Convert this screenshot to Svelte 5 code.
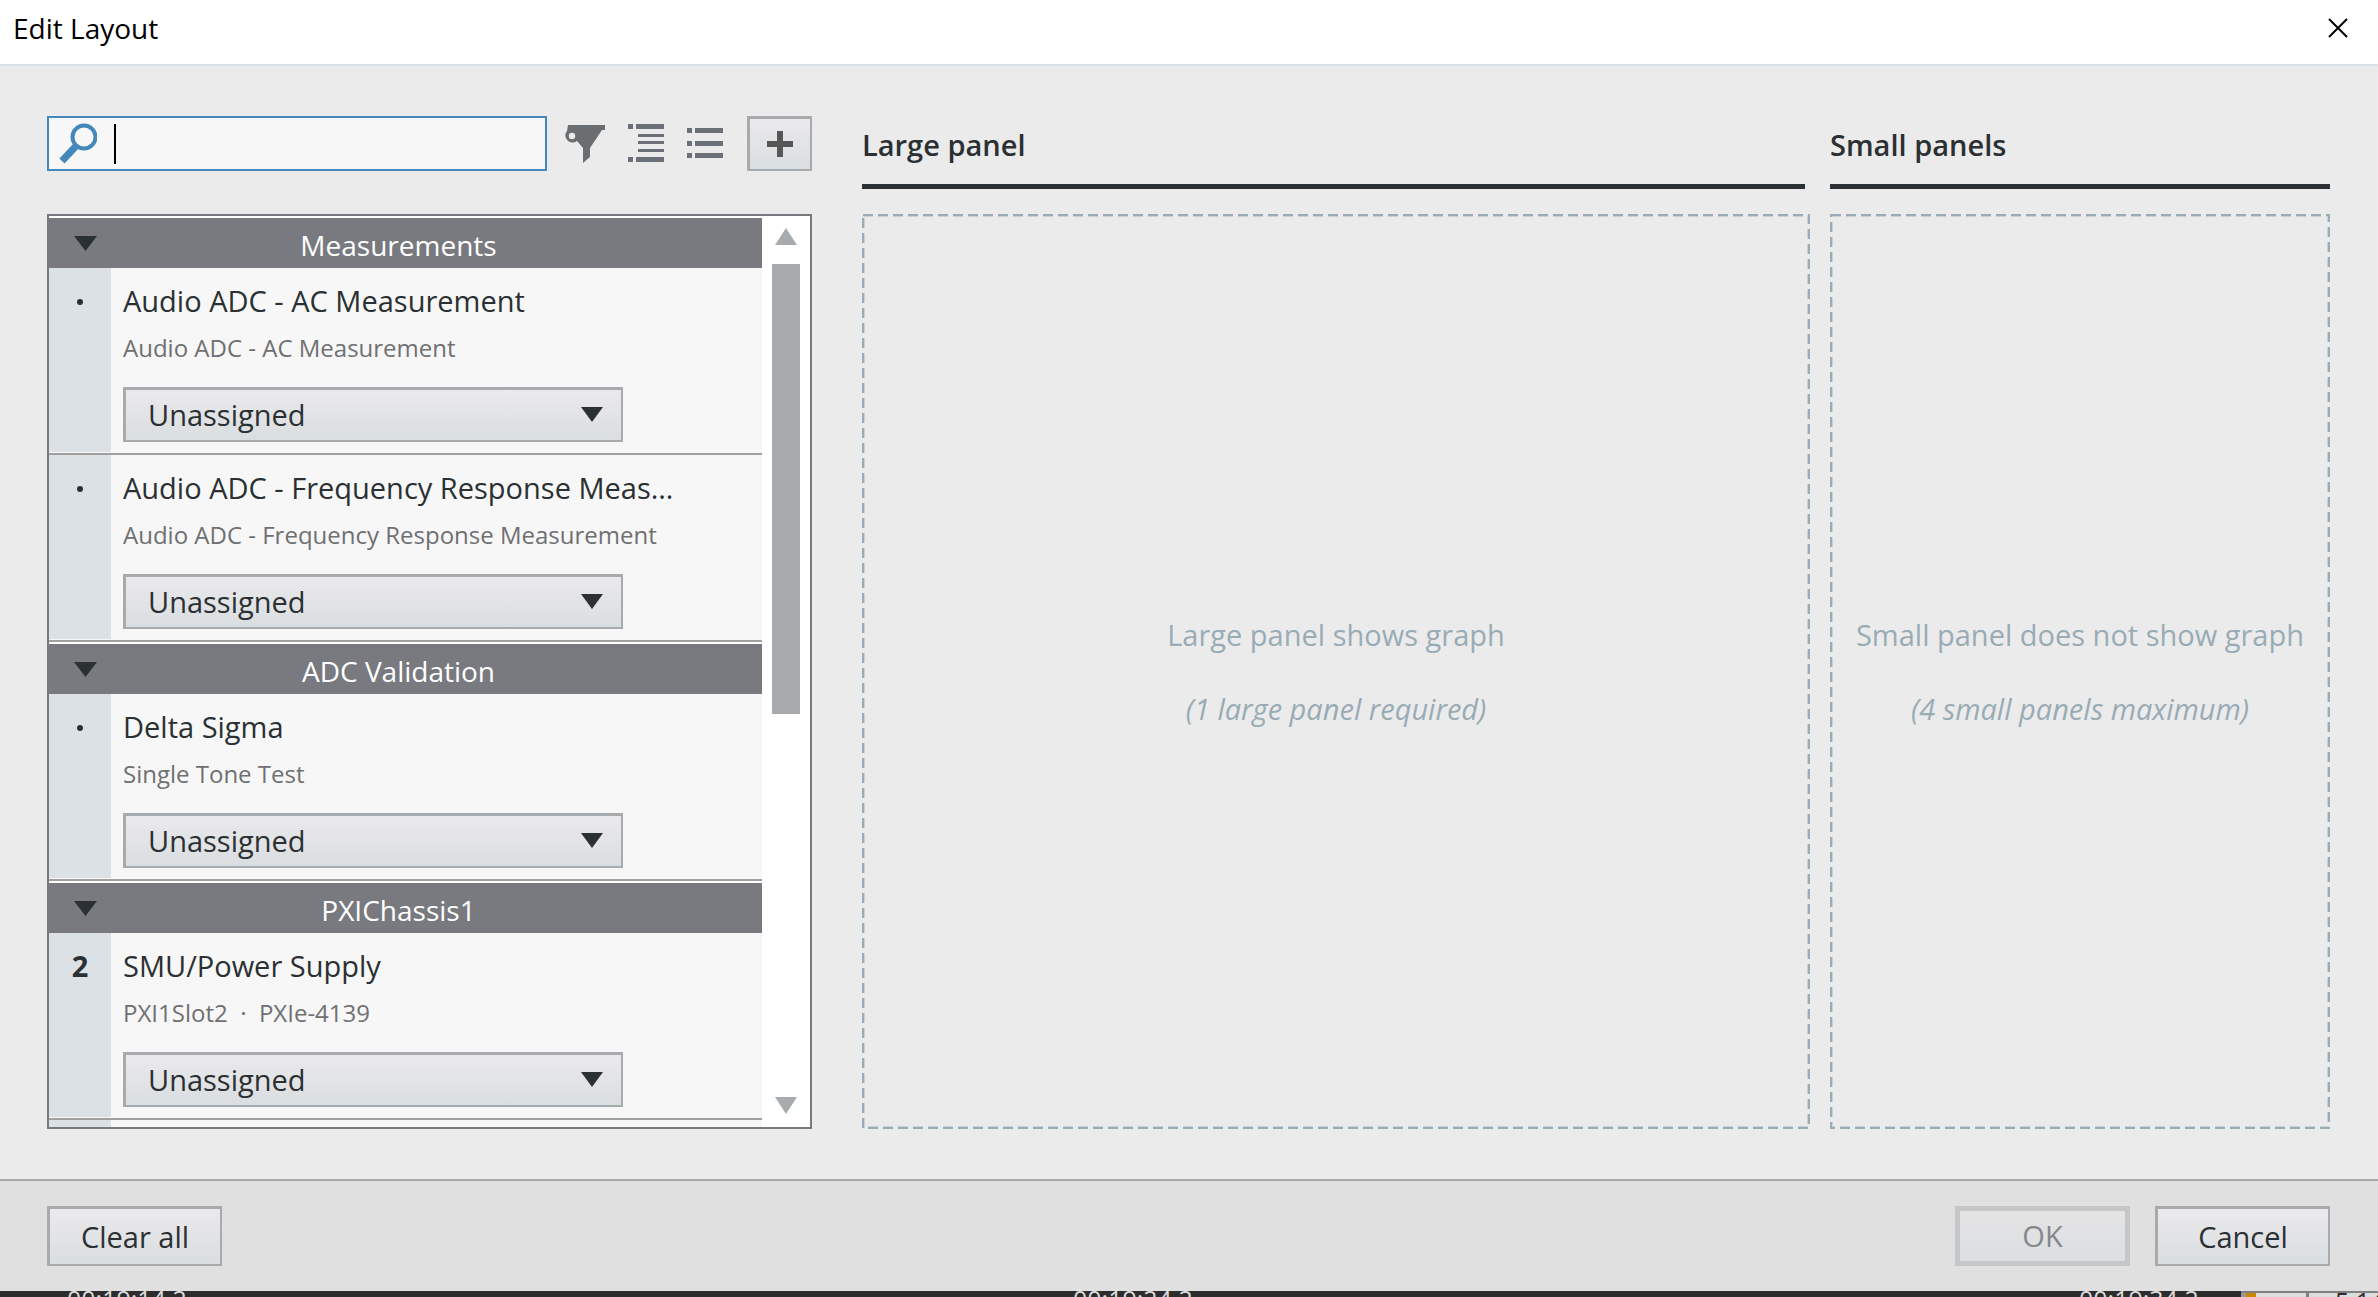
<script>
  const groups = [
    {
      name: 'Measurements',
      rows: [
        { mark: '·', title: 'Audio ADC - AC Measurement', sub: 'Audio ADC - AC Measurement' },
        { mark: '·', title: 'Audio ADC - Frequency Response Measurement', sub: 'Audio ADC - Frequency Response Measurement' }
      ]
    },
    { name: 'ADC Validation', rows: [{ mark: '·', title: 'Delta Sigma', sub: 'Single Tone Test' }] },
    { name: 'PXIChassis1', rows: [{ mark: '2', title: 'SMU/Power Supply', sub: 'PXI1Slot2  ·  PXIe-4139' }, { mark: '', title: '', sub: '' }] }
  ];
  const panels = [
    { id: 'large', title: 'Large panel', text: 'Large panel shows graph', note: '(1 large panel required)' },
    { id: 'small', title: 'Small panels', text: 'Small panel does not show graph', note: '(4 small panels maximum)' }
  ];
  const stamps = ['00:19:14.2', '00:19:24.2', '00:19:34.2'];
</script>

<div class="window">
  <header class="titlebar">
    <h1>Edit Layout</h1>
    <button class="close" aria-label="Close">
      <svg width="20" height="20" viewBox="0 0 20 20"><path d="M1 1 19 19M19 1 1 19" stroke="#000" stroke-width="2" fill="none" /></svg>
    </button>
  </header>

  <main>
    <section class="sidebar">
      <div class="tools">
        <label class="search">
          <svg width="38" height="41" viewBox="0 0 38 41" fill="none" stroke="#4487bb">
            <circle cx="25" cy="14" r="11.5" stroke-width="4" />
            <path d="M17 23 3 38" stroke-width="7" />
          </svg>
          <span class="caret"></span>
          <input type="text" aria-label="Search" />
        </label>
        <button class="icon" aria-label="Filter">
          <svg width="40" height="38" viewBox="0 0 40 38">
            <path d="M3 0H40V5H37L25 23V32L18 38V23L12 16Q8 19 3 16Q-2 11 2 6Z" fill="#6a6e71" />
            <circle cx="7" cy="11" r="3.2" fill="#ebebeb" />
          </svg>
        </button>
        <button class="icon" aria-label="Detailed list">
          <svg width="36" height="39" viewBox="0 0 36 39" fill="#6b6f77">
            <path d="M0 0H5V5H0ZM8 0H36V5H8ZM10 10H36V13H10ZM10 17H36V20H10ZM10 25H36V28H10ZM0 33H5V38H0ZM8 33H36V38H8Z" />
          </svg>
        </button>
        <button class="icon" aria-label="Compact list">
          <svg width="36" height="31" viewBox="0 0 36 31" fill="#6b6f77">
            <path d="M0 0H5V5H0ZM8 0H36V5H8ZM0 13H5V18H0ZM8 13H36V18H8ZM0 25H5V30H0ZM8 25H36V30H8Z" />
          </svg>
        </button>
        <button class="btn add" aria-label="Add">
          <svg width="26" height="26" viewBox="0 0 26 26"><path d="M10 0H16V10H26V16H16V26H10V16H0V10H10Z" fill="#565656" /></svg>
        </button>
      </div>

      <div class="list">
        <div class="items">
          {#each groups as group}
            <button class="group">
              <svg width="23" height="15" viewBox="0 0 23 15"><path d="M0 0H23L11.5 15Z" fill="#2b3033" /></svg>
              <span>{group.name}</span>
            </button>
            {#each group.rows as row}
              <article class="row">
                <div class="mark">
                  {#if row.mark === '·'}<i class="dot"></i>{:else}<b>{row.mark}</b>{/if}
                </div>
                {#if row.title}
                  <div class="info">
                    <div class="name">{row.title}</div>
                    <div class="sub">{row.sub}</div>
                    <div class="pick">
                      <select class="btn" aria-label={`Panel for ${row.title}`}>
                        <option>Unassigned</option>
                        <option>Large panel</option>
                        <option>Small panel</option>
                      </select>
                      <svg width="22" height="15" viewBox="0 0 22 15"><path d="M0 0H22L11 15Z" fill="#2b3033" /></svg>
                    </div>
                  </div>
                {/if}
              </article>
            {/each}
          {/each}
        </div>
        <div class="scroll">
          <svg width="22" height="17" viewBox="0 0 22 17"><path d="M11 0 22 17H0Z" fill="#a7abae" /></svg>
          <div class="track"><div class="thumb"></div></div>
          <svg width="22" height="17" viewBox="0 0 22 17"><path d="M0 0H22L11 17Z" fill="#a7abae" /></svg>
        </div>
      </div>
    </section>

    {#each panels as p}
      <section class="panel {p.id}">
        <h2>{p.title}</h2>
        <div class="drop">
          <svg class="frame"><rect class="soft" /><rect class="line" /></svg>
          <p>{p.text}</p>
          <p><em>{p.note}</em></p>
        </div>
      </section>
    {/each}
  </main>

  <footer>
    <button class="btn">Clear all</button>
    <span class="grow"></span>
    <button class="btn ok" disabled>OK</button>
    <button class="btn">Cancel</button>
  </footer>

  <div class="behind">
    {#each stamps as s}<span class="stamp">{s}</span>{/each}
    <div class="tab"><i></i><b></b><span>5.14</span></div>
  </div>
</div>

<style>
  :global(body) { margin: 0; }
  .window {
    height: 100vh; display: flex; flex-direction: column; overflow: hidden;
    background: #ebebeb; color: #2b3033;
    font: 29px/40px "Open Sans", "Noto Sans", sans-serif;
  }
  button, select, input { font: inherit; color: inherit; box-sizing: border-box; margin: 0; border-radius: 0; }
  button { padding: 0; border: 0; background: none; display: flex; align-items: center; justify-content: center; }
  svg { display: block; flex: none; }
  h1, h2, p { margin: 0; font-size: inherit; }

  .titlebar {
    height: 66px; flex: none; display: flex; align-items: center; justify-content: space-between;
    padding: 0 30px 8px 13px; box-sizing: border-box; background: #fff; color: #000;
    border-bottom: 2px solid #dce1e5;
  }
  h1 { font-weight: 400; font-size: 28px; }

  main { flex: 1; min-height: 0; display: flex; gap: 20px; padding: 50px 48px 50px 47px; }
  .sidebar { width: 765px; flex: none; margin-right: 30px; display: flex; flex-direction: column; gap: 43px; }
  .tools { display: flex; align-items: center; height: 55px; flex: none; }
  .search {
    width: 500px; height: 55px; box-sizing: border-box; border: 2px solid #4487bb; background: #f7f7f7;
    display: flex; align-items: center; padding-left: 10px; margin-right: 18px;
  }
  .search input { flex: 1; min-width: 0; border: 0; outline: 0; background: none; }
  .caret { width: 2px; height: 40px; margin-left: 17px; background: #000; }
  .icon { margin-right: 23px; }
  .btn {
    border: solid #a7abae; border-width: 3px 2px 2px 3px;
    background: linear-gradient(#ebe9eb, #d9dee1);
  }
  .add { width: 65px; height: 55px; margin-left: auto; }

  .list { flex: 1; min-height: 0; display: flex; border: 2px solid #787a7f; background: #fff; }
  .items { flex: 1; min-width: 0; overflow: hidden; }
  .group {
    width: 100%; height: 50px; margin-top: 2px; padding: 0 15px 0 25px;
    background: #787a7f; color: #fff; font-size: 28px;
  }
  .group span { flex: 1; padding: 3px 47px 0 0; }
  .row {
    display: flex; height: 187px; box-sizing: border-box;
    border-bottom: 2px solid #a0a0a0; background: #f7f7f7;
  }
  .mark { width: 62px; flex: none; display: flex; justify-content: center; padding-top: 13px; margin-bottom: 1px; background: #dce1e5; }
  .dot { width: 6px; height: 6px; margin-top: 18px; border-radius: 3px; background: #2b3033; }
  .info { width: 560px; padding: 13px 0 0 12px; }
  .name { overflow: hidden; white-space: nowrap; text-overflow: ellipsis; }
  .sub { font-size: 24px; line-height: 36px; margin: 9px 0 21px; color: #6f7072; white-space: pre; }
  .pick { display: grid; width: 500px; align-items: center; }
  .pick select { grid-area: 1 / 1; width: 100%; height: 55px; padding: 0 0 0 22px; appearance: none; outline: 0; }
  .pick svg { grid-area: 1 / 1; justify-self: end; margin-right: 20px; pointer-events: none; }

  .scroll { width: 48px; flex: none; display: flex; flex-direction: column; align-items: center; padding: 12px 0 13px; box-sizing: border-box; }
  .track { flex: 1; width: 28px; padding: 19px 0 18px; }
  .thumb { height: 450px; background: #a7abae; }

  .panel { display: flex; flex-direction: column; gap: 25px; }
  .large { flex: 1; }
  .small { width: 500px; flex: none; }
  h2 { height: 73px; box-sizing: border-box; padding-top: 9px; border-bottom: 5px solid #2b3033; font-weight: 600; }
  .large h2 { margin-right: 5px; }
  .drop {
    position: relative; flex: 1; display: flex; flex-direction: column; align-items: center;
    justify-content: center; gap: 34px; color: #99acb5; white-space: nowrap;
  }
  .frame { position: absolute; inset: 0; width: 100%; height: 100%; }
  .frame rect { x: 1px; y: 1px; width: calc(100% - 2px); height: calc(100% - 2px); fill: none; stroke: #99acb5; stroke-width: 2px; stroke-dasharray: 10 5; }
  .frame .soft { stroke: #c9d2d6; stroke-width: 4px; }

  footer {
    height: 112px; flex: none; box-sizing: border-box; display: flex; align-items: flex-start; gap: 25px;
    padding: 25px 48px 0 47px; background: #e0e0e0; border-top: 2px solid #a7abae;
  }
  footer .btn { width: 175px; height: 60px; }
  footer .ok { border: 5px solid #c4c6c8; background: linear-gradient(#e4e4e5, #dcdee0); color: #85888a; }
  .grow { flex: 1; }

  .behind { height: 6px; flex: none; overflow: hidden; display: flex; background: #2d2d2d; color: #dcdcdc; font-size: 25px; line-height: 16px; }
  .stamp { width: 1006px; flex: none; box-sizing: border-box; padding-left: 67px; }
  .stamp:nth-child(3) { width: 229px; }
  .tab { flex: 1; display: flex; background: #dcdcdc; border-top: 2px solid #808080; color: #2d2d2d; }
  .tab i { width: 10px; border-left: 5px solid #999; background: #c80; }
  .tab b { width: 3px; margin: 0 26px 0 50px; background: #808080; }
</style>
